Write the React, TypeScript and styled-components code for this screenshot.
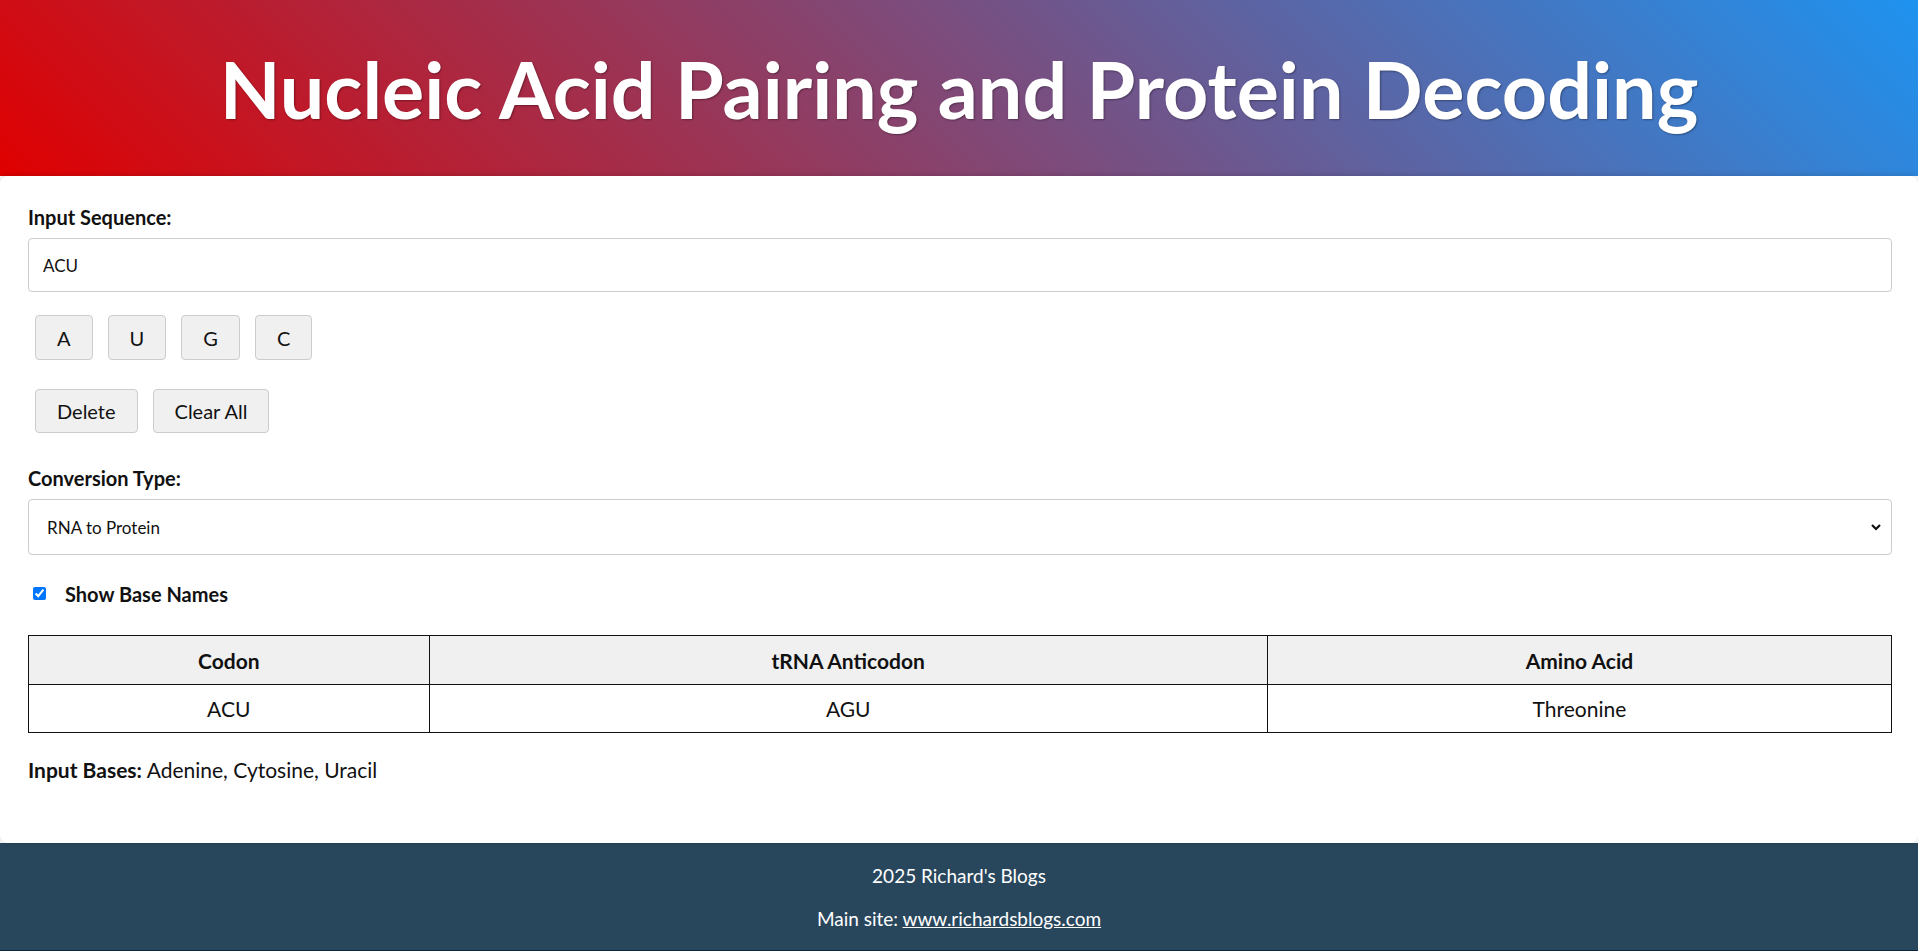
import React, { useState } from "react";
import styled, { createGlobalStyle } from "styled-components";

const GlobalStyle = createGlobalStyle`
  html, body {
    margin: 0;
    padding: 0;
    background: #ffffff;
    font-family: Lato, "Open Sans", "Noto Sans", sans-serif;
    color: #111;
  }
  * { box-sizing: border-box; }
`;

const Page = styled.div`
  display: flex;
  flex-direction: column;
  min-height: 951px;
`;

const Header = styled.header`
  height: 176px;
  display: flex;
  align-items: center;
  justify-content: center;
  background: linear-gradient(45deg, #e00000 0%, #1e93f0 100%);
`;

const Title = styled.h1`
  margin: 0;
  padding-top: 2px;
  font-family: Lato, sans-serif;
  font-weight: 700;
  font-size: 79px;
  line-height: 1.1;
  color: #fff;
  text-shadow: 1px 1px 2px rgba(0, 0, 0, 0.35);
`;

const Card = styled.main`
  flex: 1;
  background: #fff;
  border-radius: 8px;
  box-shadow: 0 0 6px rgba(0, 0, 0, 0.18);
  padding: 30px 26px 60px 28px;
  display: flex;
  flex-direction: column;
  position: relative;
  z-index: 1;
`;

const Label = styled.label<{ $top?: number }>`
  display: block;
  font-weight: 700;
  font-size: 20px;
  line-height: 23px;
  margin-top: ${(p) => p.$top ?? 0}px;
`;

const TextInput = styled.input`
  display: block;
  width: 100%;
  height: 54px;
  margin-top: 9px;
  padding: 0 14px;
  border: 1px solid #ccc;
  border-radius: 4px;
  font-family: Lato, sans-serif;
  font-size: 17px;
  color: #111;
  outline: none;
`;

const ButtonRow = styled.div<{ $top: number; $height: number }>`
  display: flex;
  gap: 15px;
  padding-left: 7px;
  margin-top: ${(p) => p.$top}px;
  height: ${(p) => p.$height}px;
`;

const Button = styled.button`
  height: 100%;
  padding: 0 21px;
  border: 1px solid #ccc;
  border-radius: 4px;
  background: #f0f0f0;
  font-family: Lato, sans-serif;
  font-size: 20px;
  color: #111;
  cursor: pointer;
`;

const SelectWrap = styled.div`
  position: relative;
  margin-top: 9px;
`;

const SelectButton = styled.button`
  width: 100%;
  height: 56px;
  display: flex;
  align-items: center;
  justify-content: space-between;
  padding: 0 8px 0 0;
  border: 1px solid #ccc;
  border-radius: 4px;
  background: #fff;
  font-family: Lato, sans-serif;
  color: #111;
  text-align: left;
  cursor: pointer;
`;

const SelectValue = styled.span`
  padding-left: 18px;
  font-size: 17px;
  font-family: Lato, sans-serif;
`;

const Menu = styled.ul`
  position: absolute;
  left: 0;
  right: 0;
  top: 100%;
  margin: 2px 0 0;
  padding: 4px 0;
  list-style: none;
  background: #fff;
  border: 1px solid #ccc;
  border-radius: 4px;
  box-shadow: 0 4px 10px rgba(0, 0, 0, 0.15);
  z-index: 5;
`;

const MenuItem = styled.li<{ $active: boolean }>`
  padding: 8px 18px;
  font-size: 17px;
  cursor: pointer;
  background: ${(p) => (p.$active ? "#e8f0fe" : "transparent")};
`;

const CheckRow = styled.label`
  display: flex;
  align-items: center;
  gap: 19px;
  margin-top: 27px;
  height: 23px;
  padding-left: 5px;
  font-weight: 700;
  font-size: 20px;
`;

const Checkbox = styled.input`
  margin: 0;
  width: 13px;
  height: 13px;
  accent-color: #0075ff;
`;

const Table = styled.table`
  margin-top: 30px;
  width: 100%;
  border-collapse: collapse;
  font-size: 21px;
`;

const Th = styled.th<{ $w: string }>`
  width: ${(p) => p.$w};
  height: 49px;
  border: 1px solid #111;
  background: #f0f0f0;
  font-weight: 700;
  text-align: center;
  padding: 0 8px;
`;

const Td = styled.td`
  height: 48px;
  border: 1px solid #111;
  text-align: center;
  padding: 0 8px;
`;

const Bases = styled.p`
  margin: 25px 0 0;
  font-size: 21px;
  line-height: 23px;
`;

const Footer = styled.footer`
  height: 108px;
  background: #29475c;
  border-bottom: 1px solid #0b2440;
  color: #fff;
  display: flex;
  flex-direction: column;
  align-items: center;
  justify-content: center;
  gap: 20px;
  font-size: 19px;
  line-height: 23px;
`;

const FooterLine = styled.div``;

const FooterLink = styled.a`
  color: #fff;
  text-decoration: underline;
`;

const letters = ["A", "U", "G", "C"];
const options = ["RNA to Protein", "DNA to RNA", "DNA to Protein"];

export default function App() {
  const [seq, setSeq] = useState("ACU");
  const [showNames, setShowNames] = useState(true);
  const [conv, setConv] = useState(options[0]);
  const [open, setOpen] = useState(false);

  return (
    <Page>
      <GlobalStyle />
      <Header>
        <Title>Nucleic Acid Pairing and Protein Decoding</Title>
      </Header>
      <Card>
        <Label htmlFor="seq">Input Sequence:</Label>
        <TextInput id="seq" value={seq} onChange={(e) => setSeq(e.target.value)} />
        <ButtonRow $top={23} $height={45}>
          {letters.map((l) => (
            <Button key={l} onClick={() => setSeq(seq + l)}>
              {l}
            </Button>
          ))}
        </ButtonRow>
        <ButtonRow $top={29} $height={44}>
          <Button onClick={() => setSeq(seq.slice(0, -1))}>Delete</Button>
          <Button onClick={() => setSeq("")}>Clear All</Button>
        </ButtonRow>
        <Label $top={34} htmlFor="conv">Conversion Type:</Label>
        <SelectWrap>
          <SelectButton
            id="conv"
            type="button"
            role="combobox"
            aria-expanded={open}
            onClick={() => setOpen(!open)}
          >
            <SelectValue>{conv}</SelectValue>
            <svg width="14" height="14" viewBox="0 0 14 14">
              <path d="M3 5 L7 9 L11 5" fill="none" stroke="#111" strokeWidth="2.2" />
            </svg>
          </SelectButton>
          {open && (
            <Menu role="listbox">
              {options.map((o) => (
                <MenuItem
                  key={o}
                  $active={o === conv}
                  onClick={() => {
                    setConv(o);
                    setOpen(false);
                  }}
                >
                  {o}
                </MenuItem>
              ))}
            </Menu>
          )}
        </SelectWrap>
        <CheckRow>
          <Checkbox
            type="checkbox"
            checked={showNames}
            onChange={(e) => setShowNames(e.target.checked)}
          />
          Show Base Names
        </CheckRow>
        <Table>
          <thead>
            <tr>
              <Th $w="21.5%">Codon</Th>
              <Th $w="45%">tRNA Anticodon</Th>
              <Th $w="33.5%">Amino Acid</Th>
            </tr>
          </thead>
          <tbody>
            <tr>
              <Td>ACU</Td>
              <Td>AGU</Td>
              <Td>Threonine</Td>
            </tr>
          </tbody>
        </Table>
        <Bases>
          <strong>Input Bases:</strong> Adenine, Cytosine, Uracil
        </Bases>
      </Card>
      <Footer>
        <FooterLine>2025 Richard's Blogs</FooterLine>
        <FooterLine>
          Main site: <FooterLink href="#">www.richardsblogs.com</FooterLink>
        </FooterLine>
      </Footer>
    </Page>
  );
}
